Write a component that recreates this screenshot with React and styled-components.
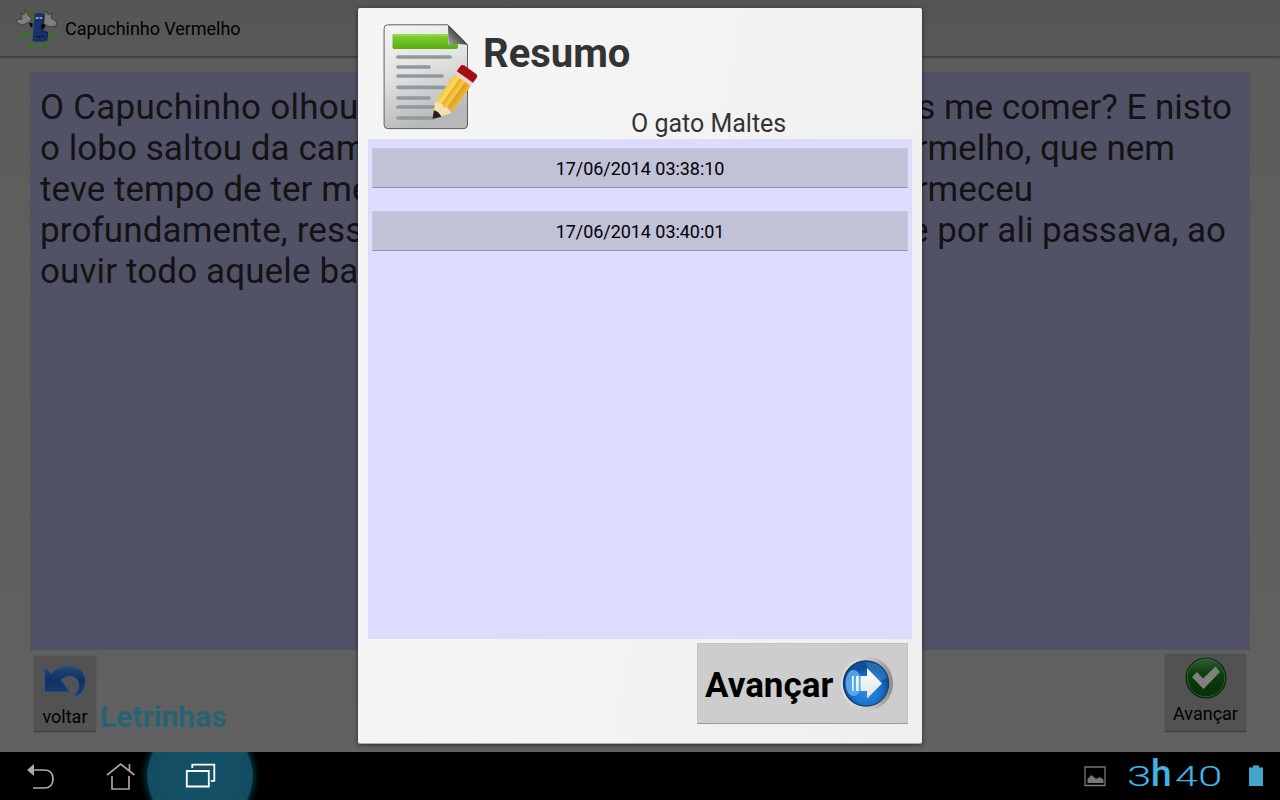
import React from "react";
import styled, { createGlobalStyle } from "styled-components";

const Global = createGlobalStyle`
  * { box-sizing: border-box; }
  body { margin: 0; font-family: Roboto, "Liberation Sans", sans-serif; overflow: hidden; }
  svg { display: block; flex: none; }
`;

const Screen = styled.div`
  position: relative;
  width: 1280px;
  height: 800px;
  display: flex;
  flex-direction: column;
  background: #000;
`;
const Activity = styled.div`
  height: 752px;
  display: flex;
  flex-direction: column;
  background: linear-gradient(#5b5b5b, #5f5f5f 40%, #616161);
`;
const ActionBar = styled.header`
  height: 57px;
  flex: none;
  display: flex;
  align-items: center;
  gap: 6px;
  padding: 1px 0 0 16px;
  background: linear-gradient(#555, #595959);
  border-bottom: 1px solid #3e3e3e;
  box-shadow: 0 1px 2px rgba(0, 0, 0, 0.25);
`;
const Line = styled.span`
  display: block;
  white-space: pre;
  flex: none;
  color: ${(p) => p.$color || "#000"};
  font-size: ${(p) => p.$size}px;
  font-weight: ${(p) => p.$weight || 400};
  letter-spacing: ${(p) => p.$track || 0}px;
  line-height: ${(p) => p.$lh || 1.17};
`;
const Story = styled.main`
  height: 578px;
  flex: none;
  margin: 15px 30px 0;
  padding: 15px 10px;
  background: #525266;
`;
const StoryRow = styled.div`
  display: flex;
  justify-content: space-between;
  width: ${(p) => p.$width}px;
  height: 41px;
`;
const Footer = styled.footer`
  display: flex;
  align-items: flex-start;
  padding: 4px 34px 0;
`;
const SmallButton = styled.button`
  width: ${(p) => p.$w}px;
  height: ${(p) => p.$h}px;
  margin-top: ${(p) => p.$top || 0}px;
  margin-left: ${(p) => p.$left || 0};
  display: flex;
  flex-direction: column;
  align-items: center;
  gap: ${(p) => p.$gap}px;
  padding: ${(p) => p.$pad}px 0 0;
  border: 0;
  border-bottom: 1px solid #3c3c3c;
  font-family: inherit;
  background: #525252;
  box-shadow: 0 0 1px #444;
`;
const Brand = styled.div`
  margin: 45px 0 0 4px;
`;
const Dialog = styled.section`
  position: absolute;
  left: 358px;
  top: 8px;
  width: 564px;
  height: 736px;
  padding: 0 10px;
  border-radius: 2px;
  border-bottom: 1px solid #aaa;
  background: linear-gradient(100deg, #f5f5f5, #f3f3f3 50%, #efefef);
  box-shadow: 0 1px 5px rgba(0, 0, 0, 0.55);
`;
const DialogHead = styled.div`
  height: 131px;
  display: flex;
  padding: 14px 0 0 13px;
`;
const Titles = styled.div`
  padding: 9px 0 0 4px;
`;
const Subtitle = styled.div`
  padding: 31px 0 0 148px;
`;
const List = styled.div`
  height: 500px;
  padding: 9px 4px;
  display: flex;
  flex-direction: column;
  gap: 23px;
  background: #dcdcff;
`;
const Entry = styled.button`
  height: 40px;
  flex: none;
  display: flex;
  align-items: center;
  justify-content: center;
  padding: 2px 0 0;
  border: 1px solid #cacadf;
  border-bottom-color: #9292a8;
  font-family: inherit;
  background: #c1c1d7;
`;
const NextButton = styled.button`
  width: 211px;
  height: 81px;
  margin: 4px 4px 0 auto;
  display: flex;
  align-items: center;
  gap: 7px;
  padding: 0 0 0 7px;
  border: 1px solid #c4c4c4;
  border-bottom: 1px solid #989898;
  font-family: inherit;
  background: #cdcdcd;
`;
const NextLabel = styled.div`
  padding-top: 5px;
`;
const NavBar = styled.nav`
  height: 48px;
  display: flex;
  align-items: center;
  overflow: hidden;
  padding-left: 20px;
`;
const NavSlot = styled.div`
  width: ${(p) => p.$w}px;
  height: 48px;
  flex: none;
  display: flex;
`;
const Status = styled.div`
  margin-left: auto;
  display: flex;
  align-items: center;
  height: 48px;
  padding-right: 16px;
`;
const Clock = styled.div`
  display: flex;
  align-items: baseline;
  width: 96px;
  height: 46px;
  margin: 0 26px 0 21px;
  color: #3db5e6;
`;
const Digit = styled.span`
  width: ${(p) => p.$w}px;
  font-size: 27.5px;
  font-weight: 300;
  line-height: 42px;
  transform: scaleX(${(p) => p.$stretch});
  transform-origin: left;
`;
const Hour = styled.span`
  width: 24px;
  font-size: 37px;
  font-weight: 500;
  line-height: 42px;
`;

const story = [
  ["O Capuchinho olhou", "s me comer? E nisto", 1192, 0.26],
  ["o lobo saltou da cam", "rmelho, que nem", 1135, 0.05],
  ["teve tempo de ter me", "rmeceu", 993, 0.05],
  ["profundamente, ress", "e por ali passava, ao", 1186, 0.12],
  ["ouvir todo aquele ba", "", 1190, 0.12],
];

const Mascot = () => (
  <svg width="43" height="42" viewBox="16 7 43 42">
    <g fill="none" stroke="#3d6d25" strokeWidth="2.6">
      <path d="M34 22 29.500 9M42 22l6-12.500M33 32q-10-1-14.500 7.500M47 32q8 1 9.500 7.500" />
    </g>
    <path d="m32 39 4 1q-2 6-6 8l-4-1q4-3 6-8ZM40 40l4-1q1 5 5 8l-4 1q-4-3-5-8Z" fill="#3d6d25" />
    <path d="M34.500 13q4-2 9.500 0l-1 16 5 2-1 9q-8 2-14.500 0Z" fill="#16336b" />
    <path d="m43.500 14-1 16 5 2-1 8" fill="none" stroke="#0d2143" />
    <g fill="#7e7e7e" stroke="#252525" strokeWidth=".6">
      <path d="M31 20 23 24q-6-1-7-5l6-1-1-6 3 2 1-5 3 5 3 3Z" />
      <path d="m44 20 1-8 2-2 1 4 4-2-1 5 6 4-1 4-6 1-6-3Z" />
    </g>
    <path d="M29 22h3.500v4h-2zM41 24l4-1v4l-4 1z" fill="#080808" />
    <ellipse cx="37" cy="17" rx="1.8" ry="1" fill="#999" />
    <ellipse cx="41" cy="17" rx="1.8" ry="1" fill="#999" />
    <path d="M36 35q4 2 8 0" stroke="#071020" fill="none" />
  </svg>
);

const Notes = () => (
  <svg width="98" height="110" viewBox="381 22 98 110">
    <defs>
      <linearGradient id="paper" x2=".3" y2="1"><stop stopColor="#f5f5f5" /><stop offset=".5" stopColor="#e2e2e2" /><stop offset="1" stopColor="#b8b8b8" /></linearGradient>
      <linearGradient id="green" x2="0" y2="1"><stop stopColor="#82d43b" /><stop offset="1" stopColor="#59ac0b" /></linearGradient>
      <linearGradient id="fold" x1="1" y1="0" x2="0" y2="1"><stop stopColor="#444" /><stop offset=".55" stopColor="#555" /><stop offset="1" stopColor="#aaa" /></linearGradient>
      <linearGradient id="pencil"><stop stopColor="#f3c747" /><stop offset=".3" stopColor="#ffda66" /><stop offset=".34" stopColor="#e9ad26" /><stop offset=".62" stopColor="#f9c94f" /><stop offset=".68" stopColor="#dba01f" /><stop offset="1" stopColor="#efb936" /></linearGradient>
    </defs>
    <path d="M387.5 24.8H448l19.5 20V125q0 3.6-3.6 3.6h-76q-3.8 0-3.8-3.6V28.5q0-3.7 3.4-3.7Z" fill="url(#paper)" stroke="#606060" />
    <path d="M394 34h54v10h10v3q0 2-2 2h-62q-1.5 0-1.5-2V35.5q0-1.5 1.5-1.5Z" fill="url(#green)" />
    <path d="M394 35h54" stroke="#a1e560" />
    <path d="M448 25q18.5 17 19.5 20-10-2-19 0Z" fill="url(#fold)" />
    <path d="M398 57h52M398 67h31M398 76h44M398 87.3h46M398 98h31M398 107h38M398 118h35" stroke="#8d9b9f" strokeWidth="3.7" strokeLinecap="round" />
    <g transform="translate(432.5 119) rotate(35.5)">
      <path d="M0 0-8-16Q0-20 12-16Z" fill="#f4dfae" />
      <path d="M0 0-4-8q4-2 10 1Z" fill="#202020" />
      <path d="M-8-16V-50H12V-16L7-19 2-16-3-19Z" fill="url(#pencil)" />
      <path d="M-8-54H12V-49H-8Z" fill="#ead5c6" />
      <path d="M-8-53V-59q0-3 3-3H9q3 0 3 3v6Z" fill="#a60d16" />
    </g>
  </svg>
);

const ArrowBall = () => (
  <svg width="54" height="58" viewBox="840 655 54 58">
    <defs>
      <linearGradient id="rim"><stop stopColor="#e2e2e2" /><stop offset=".6" stopColor="#c4c4c4" /><stop offset="1" stopColor="#8a8a8a" /></linearGradient>
      <radialGradient id="ball" cx=".5" cy=".65"><stop stopColor="#328fe4" /><stop offset=".65" stopColor="#1872cc" /><stop offset="1" stopColor="#0d4f9e" /></radialGradient>
      <linearGradient id="arrow" x2="0" y2="1"><stop stopColor="#fff" /><stop offset="1" stopColor="#dce2ea" /></linearGradient>
    </defs>
    <ellipse cx="867" cy="683.5" rx="26" ry="27" fill="url(#rim)" />
    <circle cx="866" cy="683.5" r="23.2" fill="#17385f" />
    <circle cx="866.4" cy="683.6" r="22" fill="url(#ball)" />
    <path d="M865 662q18 0 22 16-12 6-20 4 4-10-2-20Z" fill="#5eadf0" opacity=".3" />
    <ellipse cx="853.5" cy="683" rx="8" ry="13" fill="#6bb9fa" opacity=".75" />
    <path d="M860.5 676H867v-8l15 15.5-15 15V691h-6.5ZM856 676h2.8v15H856ZM852 676h1.7v15H852Z" fill="url(#arrow)" />
  </svg>
);

const Undo = () => (
  <svg width="44" height="34" viewBox="43 664 44 34">
    <defs><linearGradient id="undo" x2="0" y2="1"><stop stopColor="#244977" /><stop offset=".5" stopColor="#102f63" /><stop offset="1" stopColor="#203f70" /></linearGradient></defs>
    <path d="M44.500 667 51 673.500Q61 664 72 666q13 3 13.500 15Q85 695 73 697q8-8 5-16-6-9-17-1l9 12H44.500Z" fill="url(#undo)" stroke="#365b88" strokeWidth=".8" />
  </svg>
);

const Check = () => (
  <svg width="42" height="42" viewBox="0 0 42 42">
    <defs><linearGradient id="check" x2="0" y2="1"><stop stopColor="#315f36" /><stop offset=".4" stopColor="#0c3d0c" /><stop offset="1" stopColor="#052f05" /></linearGradient></defs>
    <circle cx="21" cy="21" r="20" fill="url(#check)" stroke="#092909" strokeWidth="1.2" />
    <circle cx="21" cy="21" r="18.8" fill="none" stroke="#3c613c" strokeWidth=".8" />
    <path d="m7 20 5-5 6 6.500 12.500-12 4.500 5.500L18.500 32Z" fill="#808080" />
  </svg>
);

const BackIcon = () => (
  <svg width="60" height="48" viewBox="20 752 60 48">
    <path d="M30 770h14q9 0 9 9t-9 9H33" fill="none" stroke="#aaa" strokeWidth="1.7" />
    <path d="m27 770 7-6v12Z" fill="#aaa" />
  </svg>
);
const HomeIcon = () => (
  <svg width="60" height="48" viewBox="90 752 60 48">
    <path d="m107 775 13.7-11 13.7 11M112 776v13h17v-13M129.500 770v-6" fill="none" stroke="#a5a5a5" strokeWidth="1.7" />
  </svg>
);
const RecentsIcon = () => (
  <svg width="120" height="48" viewBox="140 752 120 48">
    <defs><radialGradient id="glow"><stop offset="0" stopColor="#155168" /><stop offset=".87" stopColor="#124d63" /><stop offset=".89" stopColor="#042028" /><stop offset="1" stopColor="#000" /></radialGradient></defs>
    <circle cx="200" cy="776" r="60" fill="url(#glow)" />
    <path d="M186.8 771h22v15.5h-22Z M192.3 768v-3.4h22v16.200h-3.5" fill="none" stroke="#fff" strokeWidth="1.8" />
  </svg>
);
const PictureIcon = () => (
  <svg width="22" height="22" viewBox="0 0 22 22">
    <path d="M1 2h20v18.500H1Z" fill="none" stroke="#777" strokeWidth="1.300" />
    <path d="M3.500 18v-4l4-4 4 3.500h2l2-1.500 4 2.500V18Z" fill="#777" />
  </svg>
);
const BatteryIcon = () => (
  <svg width="15" height="22" viewBox="0 0 15 22">
    <path d="M0 2.500h4V.500h6v2h4v18.500H0Z" fill="#44a5cc" />
  </svg>
);

export default function App() {
  return (
    <Screen>
      <Global />
      <Activity>
        <ActionBar>
          <Mascot />
          <Line $size={18} $lh="20px" $track={-0.05}>Capuchinho Vermelho</Line>
        </ActionBar>
        <Story>
          {story.map(([start, end, width, track]) => (
            <StoryRow key={start} $width={width}>
              <Line $size={35} $lh="41px" $track={track} $color="#131315">{start}</Line>
              <Line $size={35} $lh="41px" $color="#131315">{end}</Line>
            </StoryRow>
          ))}
        </Story>
        <Footer>
          <SmallButton $w={62} $h={76} $top={2} $pad={8} $gap={8}>
            <Undo />
            <Line $size={18}>voltar</Line>
          </SmallButton>
          <Brand><Line $size={30} $weight={700} $color="#266474">Letrinhas</Line></Brand>
          <SmallButton $w={81} $h={78} $left="auto" $pad={3} $gap={4}>
            <Check />
            <Line $size={18}>Avançar</Line>
          </SmallButton>
        </Footer>
      </Activity>
      <NavBar>
        <NavSlot $w={70}><BackIcon /></NavSlot>
        <NavSlot $w={50}><HomeIcon /></NavSlot>
        <NavSlot $w={120}><RecentsIcon /></NavSlot>
        <Status>
          <PictureIcon />
          <Clock>
            <Digit $w={24} $stretch={1.6}>3</Digit>
            <Hour>h</Hour>
            <Digit $w={23} $stretch={1.5}>4</Digit>
            <Digit $w={22} $stretch={1.6}>0</Digit>
          </Clock>
          <BatteryIcon />
        </Status>
      </NavBar>
      <Dialog>
        <DialogHead>
          <Notes />
          <Titles>
            <Line $size={40} $weight={700} $color="#333">Resumo</Line>
            <Subtitle><Line $size={25} $color="#333">O gato Maltes</Line></Subtitle>
          </Titles>
        </DialogHead>
        <List>
          <Entry><Line $size={18} $track={-0.05}>17/06/2014 03:38:10</Line></Entry>
          <Entry><Line $size={18} $track={-0.05}>17/06/2014 03:40:01</Line></Entry>
        </List>
        <NextButton>
          <NextLabel><Line $size={35} $weight={700}>Avançar</Line></NextLabel>
          <ArrowBall />
        </NextButton>
      </Dialog>
    </Screen>
  );
}
